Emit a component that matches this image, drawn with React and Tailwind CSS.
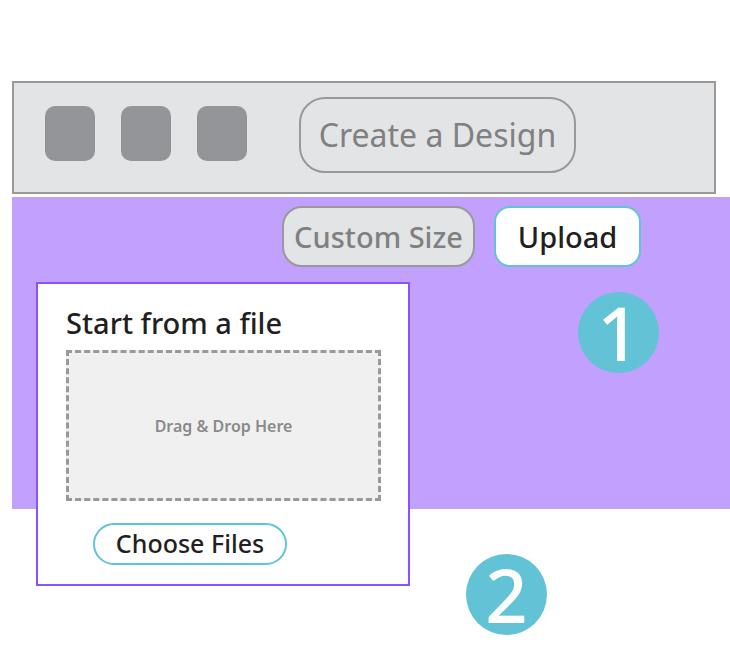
export default function App() {
  return (
    <div
      className="w-[730px] h-[646px] bg-white pt-[81px] overflow-hidden"
      style={{ fontFamily: '"Noto Sans", "Open Sans", sans-serif' }}
    >
      {/* Top bar */}
      <div className="ml-[12px] w-[704px] h-[113px] border-2 border-[#999999] bg-[#e3e4e6] flex items-start pl-[31px]">
        <div className="flex gap-[26px] mt-[23px]">
          <div className="w-[50px] h-[55px] rounded-[10px] bg-[#939598]" />
          <div className="w-[50px] h-[55px] rounded-[10px] bg-[#939598]" />
          <div className="w-[50px] h-[55px] rounded-[10px] bg-[#939598]" />
        </div>
        <div className="ml-[52px] mt-[14px] w-[277px] h-[76px] rounded-[26px] border-2 border-[#999999] flex items-center justify-center text-[32px] text-[#808080]">
          Create a Design
        </div>
      </div>

      {/* Upload panel */}
      <div className="mt-[3px] ml-[12px] w-[718px] h-[312px] bg-[#c2a0fd]">
        <div className="flex pt-[9px] pl-[270px] gap-[19px]">
          <div className="w-[193px] h-[61px] rounded-[20px] border-2 border-[#999999] bg-[#e3e4e6] flex items-center justify-center text-[29px] font-medium text-[#808080]">
            Custom Size
          </div>
          <div className="w-[147px] h-[61px] rounded-[16px] border-2 border-[#5fc4d5] bg-white flex items-center justify-center text-[29px] font-medium text-[#231f20]">
            Upload
          </div>
        </div>

        <div className="flex items-start mt-[15px] pl-[24px]">
          <div className="w-[374px] h-[304px] border-2 border-[#8c52ff] bg-white pl-[28px] pt-[22px]">
            <div className="text-[29px] leading-[34px] font-medium text-[#231f20]">Start from a file</div>
            <div className="mt-[10px] w-[315px] h-[151px] border-[3px] border-dashed border-[#999999] bg-[#f0f0f0] flex items-center justify-center text-[16px] font-semibold text-[#8a8a8a]">
              Drag &amp; Drop Here
            </div>
            <div className="mt-[22px] ml-[27px] w-[194px] h-[42px] rounded-full border-2 border-[#5fc4d5] flex items-center justify-center text-[25px] font-medium text-[#231f20]">
              Choose Files
            </div>
          </div>
          <div className="ml-[168px] mt-[10px] w-[81px] h-[81px] rounded-full bg-[#61c3d5] flex items-center justify-center text-[74px] leading-none font-medium text-white">
            1
          </div>
        </div>
      </div>

      <div className="mt-[45px] ml-[466px] w-[81px] h-[81px] rounded-full bg-[#61c3d5] flex items-center justify-center text-[74px] leading-none font-medium text-white">
        2
      </div>
    </div>
  );
}
